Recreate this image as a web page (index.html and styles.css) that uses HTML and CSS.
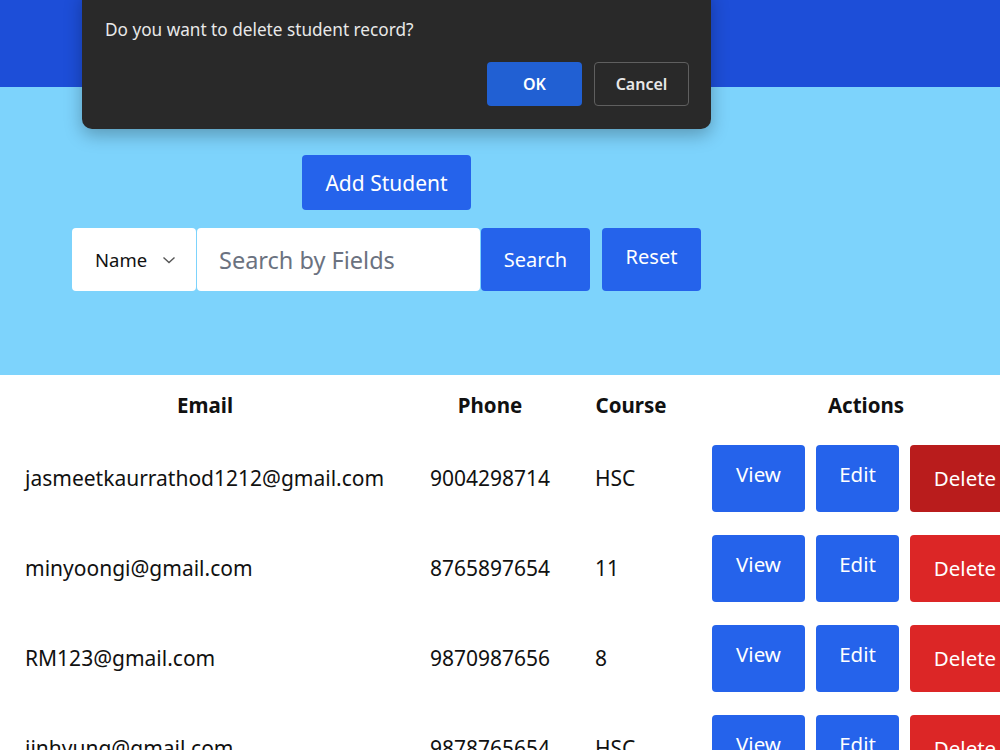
FILE: index.html
```
<html>
<head>
<meta charset="utf-8" />
<link rel="stylesheet" href="styles.css">
</head>

<body>
    <div class="topbar"></div>

    <div class="panel">
        <div class="controls">
            <button class="btn add-btn">Add Student</button>
            <div class="search-row">
                <div class="field-select">
                    <span>Name</span>
                    <svg width="14" height="14" viewBox="0 0 14 14"><path d="M1.5 4.5 L7 9.5 L12.5 4.5" fill="none" stroke="#555" stroke-width="1.4"/></svg>
                </div>
                <div class="search-input">Search by Fields</div>
                <button class="btn search-btn">Search</button>
                <button class="btn reset-btn">Reset</button>
            </div>
        </div>
    </div>

    <table class="students">
        <colgroup>
            <col class="c-email"><col class="c-phone"><col class="c-course"><col class="c-actions">
        </colgroup>
        <thead>
            <tr><th>Email</th><th>Phone</th><th>Course</th><th>Actions</th></tr>
        </thead>
        <tbody>
            <tr>
                <td class="email">jasmeetkaurrathod1212@gmail.com</td>
                <td class="phone">9004298714</td>
                <td class="course">HSC</td>
                <td class="actions"><button class="btn act">View</button><button class="btn act">Edit</button><button class="btn del hover">Delete</button></td>
            </tr>
            <tr>
                <td class="email">minyoongi@gmail.com</td>
                <td class="phone">8765897654</td>
                <td class="course">11</td>
                <td class="actions"><button class="btn act">View</button><button class="btn act">Edit</button><button class="btn del">Delete</button></td>
            </tr>
            <tr>
                <td class="email">RM123@gmail.com</td>
                <td class="phone">9870987656</td>
                <td class="course">8</td>
                <td class="actions"><button class="btn act">View</button><button class="btn act">Edit</button><button class="btn del">Delete</button></td>
            </tr>
            <tr>
                <td class="email">jinhyung@gmail.com</td>
                <td class="phone">9878765654</td>
                <td class="course">HSC</td>
                <td class="actions"><button class="btn act">View</button><button class="btn act">Edit</button><button class="btn del">Delete</button></td>
            </tr>
        </tbody>
    </table>

    <!-- confirm() dialog as the browser shows it -->
    <div class="dialog">
        <div class="dialog-text">Do you want to delete student record?</div>
        <div class="dialog-buttons">
            <button class="dlg-btn ok">OK</button>
            <button class="dlg-btn cancel">Cancel</button>
        </div>
    </div>
</body>
</html>
```
FILE: styles.css
```
body {
    margin: 0px;
    font-family: "Noto Sans", "Open Sans", sans-serif;
    background: #fff;
    color: #111;
    overflow: hidden;
    width: 1000px;
    height: 750px;
    position: relative;
}

.topbar {
    height: 87px;
    background: #1d4ed8;
}
.panel {
    height: 288px;
    background: #7dd3fc;
    padding-left: 72px;
    box-sizing: border-box;
    padding-top: 68px;
}
.controls {
    width: 629px;
    display: flex;
    flex-direction: column;
    align-items: center;
    gap: 18px;
}

.btn {
    font-family: inherit;
    border: none;
    border-radius: 4px;
    color: #fff;
    background: #2563eb;
    cursor: pointer;
    padding: 0;
}
.add-btn {
    width: 169px;
    height: 55px;
    font-size: 21px;
}
.search-row {
    display: flex;
    align-items: stretch;
    height: 63px;
    width: 100%;
}
.field-select {
    width: 124px;
    background: #fff;
    border-radius: 4px;
    display: flex;
    align-items: center;
    box-sizing: border-box;
    padding-left: 23px;
    gap: 15px;
    font-size: 18.5px;
    color: #111;
}
.search-input {
    width: 283px;
    margin-left: 1px;
    background: #fff;
    border-radius: 4px;
    box-sizing: border-box;
    padding-left: 22px;
    display: flex;
    align-items: center;
    font-size: 23.5px;
    color: #6b7280;
}
.search-btn {
    width: 109px;
    margin-left: 1px;
    font-size: 20px;
}
.reset-btn {
    width: 99px;
    margin-left: 12px;
    font-size: 20px;
    padding-bottom: 6px;
}

.students {
    border-collapse: collapse;
    table-layout: fixed;
    width: 1040px;
    margin-left: 10px;
    font-size: 21px;
}
.c-email { width: 390px; }
.c-phone { width: 180px; }
.c-course { width: 102px; }
.c-actions { width: 368px; }
.students th {
    height: 58px;
    text-align: center;
    font-weight: bold;
    font-size: 20.5px;
    padding: 0;
    padding-top: 2px;
}
.students td {
    height: 90px;
    padding: 0;
    text-align: left;
    vertical-align: middle;
}
td.email { padding-left: 15px; }
td.phone { padding-left: 30px; }
td.course { padding-left: 15px; }
td.actions {
    padding-left: 30px;
    white-space: nowrap;
}
td.actions .btn {
    height: 67px;
    font-size: 20.5px;
    margin-right: 11px;
    vertical-align: middle;
}
.act {
    width: 93px;
    padding-bottom: 9px;
}
.act + .act {
    width: 83px;
}
.del {
    width: 110px;
    background: #dc2626;
}
.del.hover {
    background: #b91c1c;
}

.dialog {
    position: absolute;
    top: -12px;
    left: 82px;
    width: 629px;
    height: 141px;
    box-sizing: border-box;
    background: #292929;
    border-radius: 10px;
    box-shadow: 0 6px 18px rgba(0, 0, 0, 0.28);
    padding: 30px 22px 0 23px;
    color: #e8e8e8;
    font-family: "Noto Sans", sans-serif;
}
.dialog-text {
    font-size: 17.2px;
}
.dialog-buttons {
    display: flex;
    justify-content: flex-end;
    gap: 12px;
    margin-top: 21px;
}
.dlg-btn {
    width: 95px;
    height: 44px;
    border-radius: 4px;
    font-family: inherit;
    font-size: 16px;
    font-weight: 600;
    color: #fff;
}
.ok {
    background: #2160d3;
    border: none;
}
.cancel {
    background: #292929;
    border: 1px solid #5f5f5f;
    color: #e8e8e8;
}
```
